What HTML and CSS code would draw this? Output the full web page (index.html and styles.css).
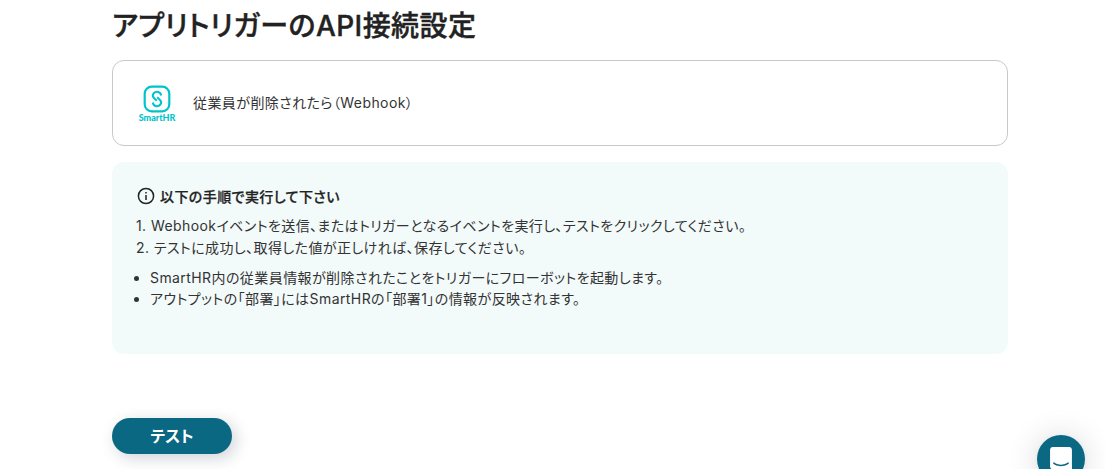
FILE: index.html
```html
<!DOCTYPE html>
<html lang="ja">
<head>
  <meta charset="UTF-8">
  <meta name="viewport" content="width=device-width, initial-scale=1.0">
  <title>アプリトリガーのAPI接続設定</title>
  <link rel="stylesheet" href="styles.css">
</head>
<body>
  <main class="page">
    <h1 class="title">アプリトリガーのAPI接続設定</h1>

    <section class="trigger-card">
      <div class="app-logo">
        <svg width="28" height="28" viewBox="0 0 28 28" fill="none" stroke="#00c4cc">
          <rect x="1.7" y="1.7" width="24.6" height="24.600" rx="7" stroke-width="2.2"/>
          <path d="M18.200 10.500A4.300 4.300 0 0 0 10.800 8.200C9.400 10 9.700 12 11.200 13.300L13.800 15.700M9.800 17.500A4.300 4.300 0 0 0 17.200 19.800C18.600 18 18.300 16 16.800 14.700L14.200 12.300" stroke-width="2"/>
        </svg>
        <span class="app-name">SmartHR</span>
      </div>
      <span class="trigger-name">従業員が削除されたら（Webhook）</span>
    </section>

    <section class="guide">
      <div class="guide-heading">
        <svg width="20" height="20" viewBox="0 0 20 20" fill="none" stroke="currentColor" stroke-width="1.500">
          <circle cx="10" cy="10" r="7.600"/>
          <path d="M10 9v5M10 6v1.600"/>
        </svg>
        <span>以下の手順で実行して下さい</span>
      </div>
      <p class="step">1. Webhookイベントを送信、またはトリガーとなるイベントを実行し、テストをクリックしてください。</p>
      <p class="step">2. テストに成功し、取得した値が正しければ、保存してください。</p>
      <ul class="notes">
        <li>SmartHR内の従業員情報が削除されたことをトリガーにフローボットを起動します。</li>
        <li>アウトプットの「部署」にはSmartHRの「部署1」の情報が反映されます。</li>
      </ul>
    </section>

    <button class="test-button" type="button">テスト</button>
  </main>

  <button class="chat-launcher" type="button" aria-label="チャット">
    <svg width="22" height="25" viewBox="0 0 28 32" fill="#fff">
      <path d="M28 32s-4.714-1.855-8.527-3.340H3.437C1.540 28.660 0 27.026 0 25.013V3.644C0 1.633 1.540 0 3.437 0h21.125c1.898 0 3.437 1.632 3.437 3.645v18.404H28V32zm-4.139-11.982a.88.88 0 0 0-1.292-.105c-.03.026-3.015 2.681-8.570 2.681-5.486 0-8.517-2.636-8.571-2.684a.88.88 0 0 0-1.290.107 1.010 1.010 0 0 0-.219.708.992.992 0 0 0 .318.664c.142.128 3.537 3.150 9.762 3.150 6.226 0 9.621-3.022 9.763-3.150a.992.992 0 0 0 .317-.664 1.010 1.010 0 0 0-.218-.707z"/>
    </svg>
  </button>
</body>
</html>
```
FILE: styles.css
```css
* {
  box-sizing: border-box;
}
body {
  margin: 0;
  height: 469px;
  overflow: hidden;
  background: #fff;
  color: #222;
  font-family: Inter, 'Noto Sans CJK JP', sans-serif;
  font-size: 14px;
  font-feature-settings: 'palt';
  letter-spacing: 0.42px;
}
.page {
  width: 896px;
  margin-left: 112px;
}
.title {
  margin: 0;
  padding-top: 5px;
  height: 60px;
  font-size: 28px;
  font-weight: 500;
  line-height: 42px;
  -webkit-text-stroke: 0.4px #222;
}
.trigger-card {
  display: flex;
  align-items: center;
  gap: 16px;
  height: 86px;
  padding: 0 24px;
  border: 1px solid #c8c8c8;
  border-radius: 12px;
}
.app-logo {
  display: flex;
  flex-direction: column;
  align-items: center;
  width: 40px;
  padding-top: 1px;
}
.app-name {
  color: #00c4cc;
  font-family: Lato, sans-serif;
  font-size: 9px;
  font-weight: 900;
  line-height: 10px;
  letter-spacing: 0;
}
.trigger-name {
  padding-bottom: 2px;
  color: #333;
}
.guide {
  height: 192px;
  margin-top: 16px;
  padding: 24px;
  border-radius: 12px;
  background: #f2fafa;
}
.guide-heading {
  display: flex;
  align-items: center;
  gap: 4px;
  height: 20px;
  margin-bottom: 9px;
  font-weight: 500;
}
.guide-heading span {
  -webkit-text-stroke: 0.25px #222;
}
.step {
  margin: 0;
  color: #333;
  line-height: 22px;
}
.notes {
  margin: 8px 0 0;
  padding-left: 14px;
  color: #333;
  line-height: 21px;
}
.test-button {
  display: block;
  width: 120px;
  height: 36px;
  margin-top: 64px;
  padding: 0 0 2px;
  border: none;
  border-radius: 18px;
  background: #0a6883;
  box-shadow: 4px 4px 16px rgba(8, 32, 60, 0.2);
  color: #fff;
  font: inherit;
  font-size: 16px;
  font-weight: 600;
}
.chat-launcher {
  position: fixed;
  top: 435px;
  right: 20px;
  display: flex;
  align-items: center;
  justify-content: center;
  width: 48px;
  height: 48px;
  padding: 0;
  border: none;
  border-radius: 50%;
  background: #0a6883;
  box-shadow: 0 1px 6px rgba(0, 0, 0, 0.06), 0 2px 32px rgba(0, 0, 0, 0.16);
}
```
